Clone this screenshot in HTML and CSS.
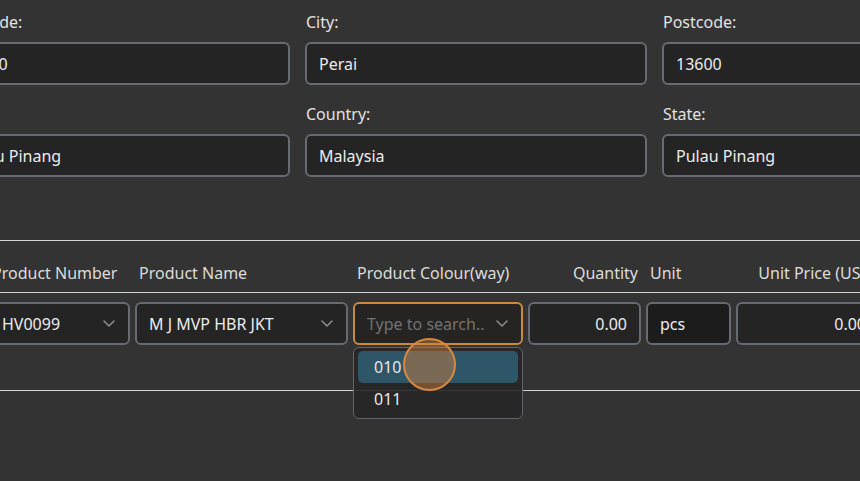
FILE: index.html
```html
<!DOCTYPE html>
<html lang="en">
<head>
<meta charset="utf-8">
<title>Order form</title>
<link rel="stylesheet" href="styles.css">
</head>
<body>
<div class="page">
  <section class="address">
    <div class="field">
      <label class="label">Postcode:</label>
      <div class="input">13600</div>
    </div>
    <div class="field">
      <label class="label">City:</label>
      <div class="input">Perai</div>
    </div>
    <div class="field">
      <label class="label">Postcode:</label>
      <div class="input">13600</div>
    </div>
    <div class="field">
      <label class="label">State:</label>
      <div class="input">Pulau Pinang</div>
    </div>
    <div class="field">
      <label class="label">Country:</label>
      <div class="input">Malaysia</div>
    </div>
    <div class="field">
      <label class="label">State:</label>
      <div class="input">Pulau Pinang</div>
    </div>
  </section>

  <section class="items">
    <div class="items-head">
      <div class="th">Product Number</div>
      <div class="th">Product Name</div>
      <div class="th">Product Colour(way)</div>
      <div class="th th-right">Quantity</div>
      <div class="th">Unit</div>
      <div class="th th-right">Unit Price (USD)</div>
    </div>
    <div class="items-row">
      <div class="cell">
        <div class="input select">
          <span class="value">HV0099</span>
          <svg class="chev" width="12" height="7" viewBox="0 0 12 7"><polyline points="1,1 6,6 11,1" fill="none" stroke="currentColor" stroke-width="1.5" stroke-linecap="round" stroke-linejoin="round"/></svg>
        </div>
      </div>
      <div class="cell">
        <div class="input select">
          <span class="value">M J MVP HBR JKT</span>
          <svg class="chev" width="12" height="7" viewBox="0 0 12 7"><polyline points="1,1 6,6 11,1" fill="none" stroke="currentColor" stroke-width="1.5" stroke-linecap="round" stroke-linejoin="round"/></svg>
        </div>
      </div>
      <div class="cell cell-colour">
        <div class="input select focused">
          <span class="value placeholder">Type to search..</span>
          <svg class="chev" width="12" height="7" viewBox="0 0 12 7"><polyline points="1,1 6,6 11,1" fill="none" stroke="currentColor" stroke-width="1.5" stroke-linecap="round" stroke-linejoin="round"/></svg>
        </div>
        <ul class="dropdown">
          <li class="option active">010</li>
          <li class="option">011</li>
        </ul>
        <div class="cursor"></div>
      </div>
      <div class="cell">
        <div class="input num">0.00</div>
      </div>
      <div class="cell">
        <div class="input dark">pcs</div>
      </div>
      <div class="cell">
        <div class="input num">0.00</div>
      </div>
    </div>
  </section>
</div>
</body>
</html>
```

FILE: styles.css
```css
html, body {
  margin: 0;
  padding: 0;
  width: 860px;
  height: 481px;
  overflow: hidden;
  background: #333333;
}

body {
  font-family: "Noto Sans", "Open Sans", sans-serif;
  font-size: 16px;
  color: #e6e6e6;
}

.page {
  padding-top: 11px;
}

.address {
  display: grid;
  grid-template-columns: 342px 342px 342px;
  column-gap: 15px;
  row-gap: 18px;
  margin-left: -52px;
  width: 1056px;
}

.field {
  display: flex;
  flex-direction: column;
}

.label {
  line-height: 22px;
  margin-bottom: 9px;
  color: #e2e2e2;
  padding-left: 1px;
}

.input {
  box-sizing: border-box;
  height: 43px;
  border: 2px solid #676a72;
  border-radius: 6px;
  background: #242424;
  padding: 0 12px;
  display: flex;
  align-items: center;
  white-space: nowrap;
  overflow: hidden;
  color: #ececec;
}

.items {
  margin-top: 63px;
  width: 860px;
}

.items-head,
.items-row {
  display: grid;
  grid-template-columns: 142px 213px 170px 113px 85px 144px;
  column-gap: 5px;
  margin-left: -12px;
  width: 892px;
}

.items-head {
  border-top: 1px solid #d2d2d2;
  border-bottom: 1px solid #d2d2d2;
  height: 51px;
  box-sizing: content-box;
  padding-top: 0;
}

.th {
  padding: 21px 4px 8px 4px;
  line-height: 22px;
  color: #dcdcdc;
  white-space: nowrap;
}

.th-right {
  text-align: right;
  padding-right: 3px;
}

.items-row {
  padding-top: 9px;
  padding-bottom: 45px;
  border-bottom: 1px solid #d2d2d2;
}

.cell {
  position: relative;
}

.select {
  justify-content: space-between;
  padding-right: 13px;
}

.select .value {
  overflow: hidden;
}

.chev {
  color: #8e8e8e;
  flex: none;
}

.focused {
  border-color: #c98a40;
  background: #252422;
}

.placeholder {
  color: #727272;
}

.num {
  justify-content: flex-end;
}

.dark {
  background: #1c1c1c;
}

.dropdown {
  position: absolute;
  z-index: 2;
  top: 45px;
  left: 0;
  width: 170px;
  box-sizing: border-box;
  margin: 0;
  padding: 3px 4px;
  list-style: none;
  border: 1px solid #62646a;
  border-radius: 6px;
  background: rgba(38, 38, 38, 0.9);
}

.option {
  height: 32px;
  line-height: 32px;
  padding-left: 16px;
  border-radius: 5px;
  color: #e8e8e8;
}

.option.active {
  background: #2f5569;
}

.cursor {
  position: absolute;
  z-index: 3;
  left: 50px;
  top: 36px;
  width: 53px;
  height: 53px;
  box-sizing: border-box;
  border-radius: 50%;
  border: 2px solid #d48a42;
  background: rgba(215, 130, 60, 0.45);
}
```
